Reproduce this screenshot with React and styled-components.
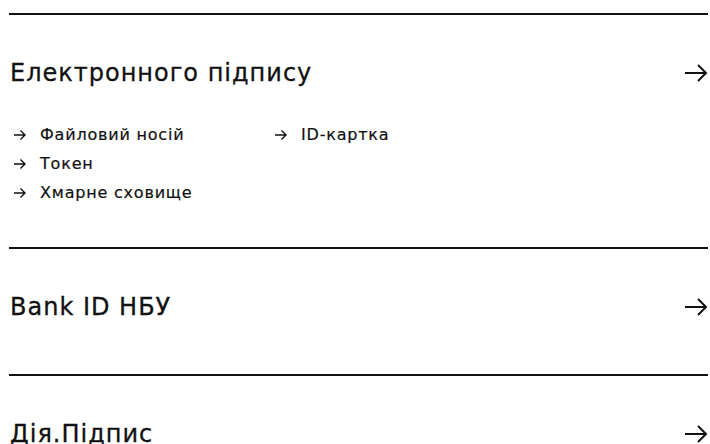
import React from "react";
import styled, { createGlobalStyle } from "styled-components";

const Global = createGlobalStyle`
  html, body { margin: 0; padding: 0; background: #fff; }
  body {
    font-family: "DejaVu Sans", "Noto Sans", sans-serif;
    color: #111;
    -webkit-font-smoothing: antialiased;
  }
`;

const Page = styled.div`
  padding: 13px 2px 0 9px;
  width: 710px;
  box-sizing: border-box;
  overflow: hidden;
`;

const Section = styled.section`
  border-top: 2px solid #111;
  padding: 42px 0 ${(p) => (p.$hasList ? "40px" : "51px")} 1px;
`;

const Header = styled.a`
  display: flex;
  align-items: center;
  justify-content: space-between;
  color: inherit;
  text-decoration: none;
`;

const Title = styled.h2`
  margin: 0;
  font-size: 24px;
  line-height: 32px;
  font-weight: 400;
  letter-spacing: 1px;
  -webkit-text-stroke: 0.3px #111;
`;

const List = styled.ul`
  list-style: none;
  margin: 31px 0 0;
  padding: 0 0 0 4px;
  display: grid;
  grid-template-columns: 261px auto;
  grid-auto-flow: column;
  grid-template-rows: repeat(3, 29px);
  justify-content: start;
`;

const Item = styled.li`
  display: flex;
  align-items: center;
  gap: 14px;
  font-size: 16px;
  line-height: 29px;
  letter-spacing: 0.8px;
  -webkit-text-stroke: 0.2px #111;
`;

const BigArrow = () => (
  <svg width="24" height="20" viewBox="0 0 24 20" fill="none">
    <path d="M1 10H22M14 2l8 8-8 8" stroke="#111" strokeWidth="2" />
  </svg>
);

const SmallArrow = () => (
  <svg width="12" height="10" viewBox="0 0 12 10" fill="none">
    <path d="M0 5h11M6.5 0.5L11 5l-4.5 4.5" stroke="#111" strokeWidth="1.4" />
  </svg>
);

const groups = [
  {
    title: "Електронного підпису",
    items: ["Файловий носій", "Токен", "Хмарне сховище", "ID-картка"],
  },
  { title: "Bank ID НБУ" },
  { title: "Дія.Підпис" },
];

export default function App() {
  return (
    <>
      <Global />
      <Page>
        {groups.map((g) => (
          <Section key={g.title} $hasList={!!g.items}>
            <Header href="#">
              <Title>{g.title}</Title>
              <BigArrow />
            </Header>
            {g.items && (
              <List>
                {g.items.map((it) => (
                  <Item key={it}>
                    <SmallArrow />
                    {it}
                  </Item>
                ))}
              </List>
            )}
          </Section>
        ))}
      </Page>
    </>
  );
}
